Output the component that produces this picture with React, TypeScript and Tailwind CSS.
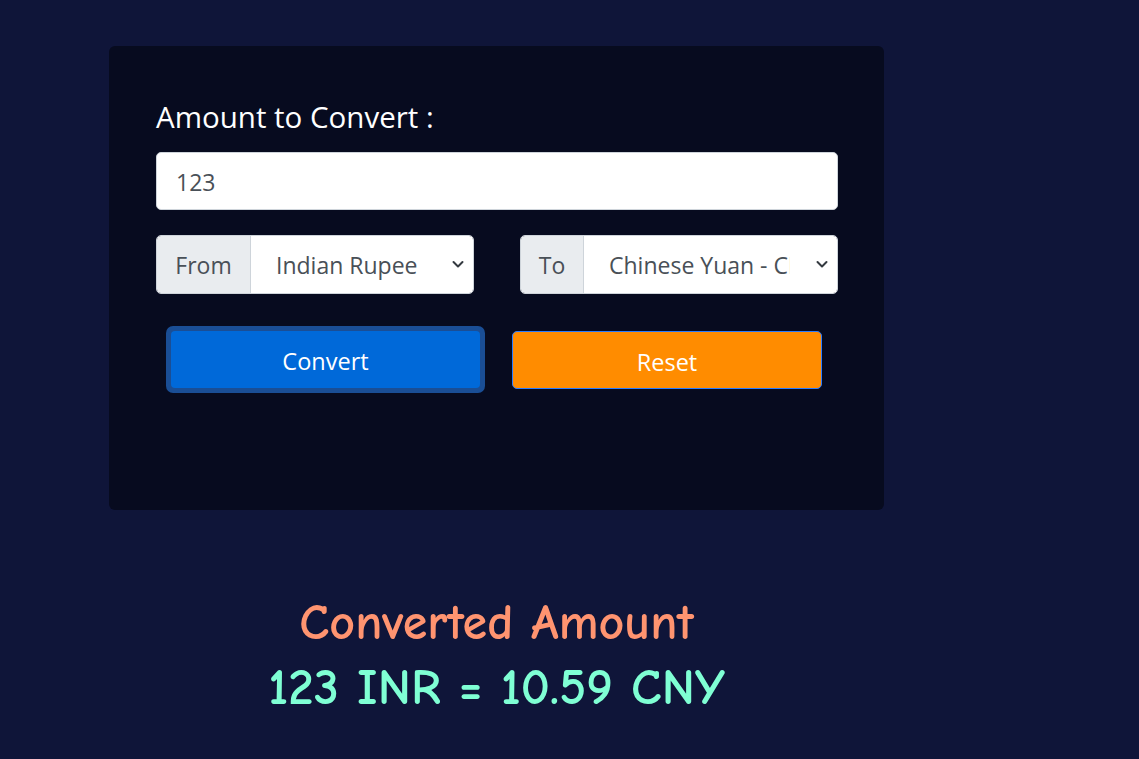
import { useState } from "react";

// currency converter card — single view
const sans = "font-['Open_Sans','Noto_Sans',sans-serif]";
const comic = "font-['Comic_Sans_MS','Comic_Neue',cursive]";

function Chevron() {
  return (
    <svg width="12" height="9" viewBox="0 0 12 9" className="shrink-0">
      <path d="M1.5 2 L6 6.5 L10.5 2" fill="none" stroke="#343a40" strokeWidth="2" strokeLinecap="round" strokeLinejoin="round" />
    </svg>
  );
}

function Picker({ label, value, labelW }: { label: string; value: string; labelW: string }) {
  return (
    <div className="flex h-[59px] w-[318px] rounded-[5px] border border-[#ced4da] overflow-hidden">
      <div className={`${labelW} flex items-center justify-center bg-[#e9ecef] border-r border-[#ced4da] pt-[2px] text-[23px] text-[#495057]`}>
        {label}
      </div>
      <div className="flex-1 flex items-center bg-white pl-[25px] pr-[9px] min-w-0">
        <div className="flex-1 min-w-0 mr-[26px] pt-[2px] overflow-hidden whitespace-nowrap text-[23px] text-[#495057]">{value}</div>
        <Chevron />
      </div>
    </div>
  );
}

export default function App() {
  const [amount, setAmount] = useState("123");
  return (
    <div className={`min-h-[759px] w-full bg-[#0f1539] ${sans} pt-[46px] pl-[109px]`}>
      <div className="w-[775px] h-[464px] rounded-[6px] bg-[#070b1f] pl-[47px] pr-[46px] pt-[51px]">
        <div className="text-[29.5px] leading-[40px] text-white">Amount to Convert :</div>
        <input
          value={amount}
          onChange={(e) => setAmount(e.target.value)}
          className="mt-[15px] block w-full h-[58px] rounded-[5px] border border-[#ced4da] bg-white px-[19px] pt-[2px] text-[23px] text-[#495057] outline-none"
        />
        <div className="mt-[25px] flex justify-between">
          <Picker label="From" value="Indian Rupee" labelW="w-[94px]" />
          <Picker label="To" value="Chinese Yuan - CNY" labelW="w-[63px]" />
        </div>
        <div className="mt-[32px] flex">
          <button className="ml-[10px] w-[319px] h-[67px] rounded-[7px] bg-[#1a4e95] p-[5px]">
            <span className="flex h-full w-full items-center justify-center rounded-[4px] bg-[#0069d9] pt-[5px] text-[23.5px] text-white">Convert</span>
          </button>
          <button className="ml-[27px] mt-[5px] w-[310px] h-[58px] rounded-[5px] border border-[#2b7bff] bg-[#ff8c00] pt-[5px] text-[23.5px] text-white">
            Reset
          </button>
        </div>
      </div>
      <div className={`w-[775px] mt-[81px] text-center font-bold ${comic}`}>
        <div className="text-[50px] leading-[64px] text-[#ff9470]">Converted Amount</div>
        <div className="text-[51px] leading-[66px] text-[#7fffd4]">123 INR = 10.59 CNY</div>
      </div>
    </div>
  );
}
